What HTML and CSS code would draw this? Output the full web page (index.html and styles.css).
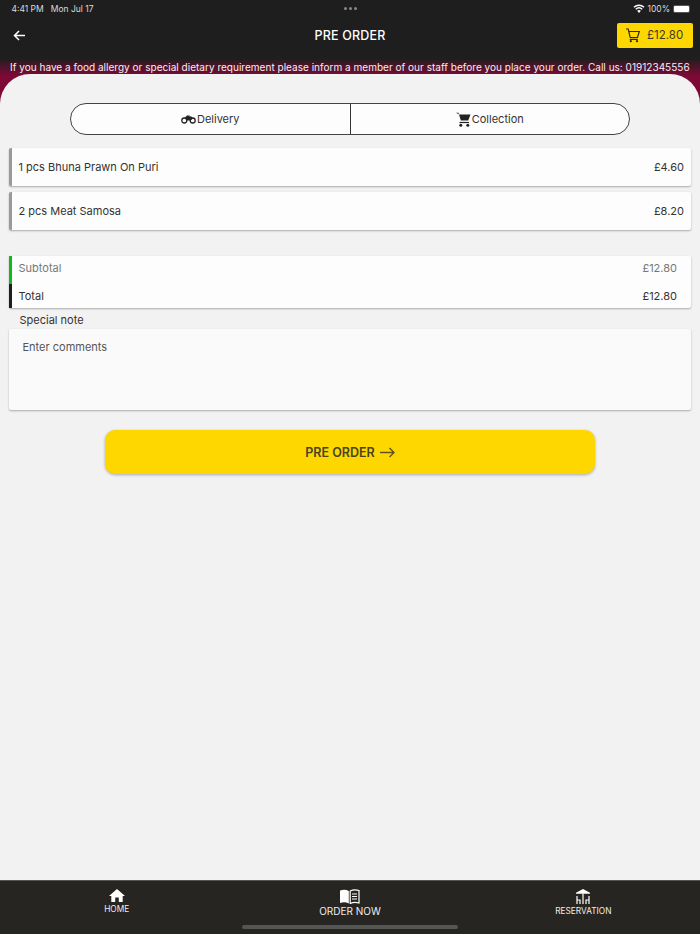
FILE: index.html
```html
<!DOCTYPE html>
<html lang="en">
<head>
    <meta charset="UTF-8">
    <meta name="viewport" content="width=device-width, initial-scale=1.0">
    <title>Pre Order</title>
    <link rel="stylesheet" href="styles.css">
</head>
<body>
    <div class="app">
        <header class="top">
            <div class="status-bar">
                <span class="status-time">4:41 PM<span class="status-date">Mon Jul 17</span></span>
                <span class="status-dots"><i></i><i></i><i></i></span>
                <span class="status-right">
                    <svg class="wifi" width="12" height="9" viewBox="0 0 24 18"><path d="M12 18l-3.600-4.400a5.600 5.600 0 0 1 7.200 0z" fill="#fff"/><path d="M2 6.500a15 15 0 0 1 20 0M5.600 10.500a9.600 9.600 0 0 1 12.800 0" fill="none" stroke="#fff" stroke-width="3"/></svg>
                    100%
                    <span class="battery"><span class="battery-fill"></span></span>
                </span>
            </div>
            <div class="nav-bar">
                <svg class="back" width="13" height="11" viewBox="0 0 14 12"><path d="M13 6H1.500M6.500 1L1.500 6l5 5" fill="none" stroke="#fff" stroke-width="1.600"/></svg>
                <h1 class="nav-title">PRE ORDER</h1>
                <button class="cart-btn">
                    <svg width="16" height="16" viewBox="0 0 16 16"><path d="M1 2h2.200l2 8.500h7.300L14.300 4.500H3.800M4.800 12.300h8" fill="none" stroke="#2a2a20" stroke-width="1.200"/><circle cx="5.800" cy="14.200" r="1.100" fill="#2a2a20"/><circle cx="12" cy="14.200" r="1.100" fill="#2a2a20"/></svg>
                    <span>£12.80</span>
                </button>
            </div>
        </header>

        <div class="sheet-wrap">
            <p class="allergy">If you have a food allergy or special dietary requirement please inform a member of our staff before you place your order. Call us: 01912345556</p>
            <main class="sheet">
                <div class="method">
                    <button class="method-btn">
                        <svg width="15" height="10" viewBox="0 0 15 10"><circle cx="3.300" cy="6.500" r="2.500" fill="none" stroke="#222" stroke-width="1.300"/><circle cx="11.700" cy="6.500" r="2.500" fill="none" stroke="#222" stroke-width="1.300"/><path d="M3.500 4L6 1.500h3l-1 .8 2.500.2 1.500 2-2.500 2h-3z" fill="#222"/></svg>
                        Delivery
                    </button>
                    <button class="method-btn">
                        <svg width="15" height="15" viewBox="0 0 15 15"><path d="M0 .8h2.500l2.300 7.600h7.400L14.500 2.500H3.200z" fill="#222"/><path d="M3.500 10.500h9.500" stroke="#222" stroke-width="1.200"/><circle cx="4.800" cy="13.200" r="1.500" fill="#222"/><circle cx="11.800" cy="13.200" r="1.500" fill="#222"/></svg>
                        Collection
                    </button>
                </div>

                <div class="item">
                    <span>1 pcs Bhuna Prawn On Puri</span>
                    <span>£4.60</span>
                </div>
                <div class="item">
                    <span>2 pcs Meat Samosa</span>
                    <span>£8.20</span>
                </div>

                <div class="totals">
                    <div class="total-row subtotal">
                        <span>Subtotal</span>
                        <span>£12.80</span>
                    </div>
                    <div class="total-row total">
                        <span>Total</span>
                        <span>£12.80</span>
                    </div>
                </div>

                <div class="note-label">Special note</div>
                <textarea class="note" placeholder="Enter comments"></textarea>

                <button class="submit">
                    PRE ORDER
                    <svg width="15" height="11" viewBox="0 0 15 11"><path d="M0 5.500h14M9.500 1L14 5.500 9.500 10" fill="none" stroke="#5e5420" stroke-width="1.400"/></svg>
                </button>
            </main>
        </div>

        <nav class="tabs">
            <div class="tab">
                <svg width="16" height="13" viewBox="0 0 16 13"><path d="M8 0L0 7h2.300v6h3.900V8.500h3.600V13h3.900V7H16z" fill="#fff"/></svg>
                <span>HOME</span>
            </div>
            <div class="tab tab-main">
                <svg width="21" height="15" viewBox="0 0 21 15"><path d="M1 1.500C4 .5 7 .5 9.800 2v12.500C7 13 4 13 1 14z" fill="#fff"/><path d="M11.200 2C14 .5 17 .5 20 1.500V14c-3-1-6-1-8.800.5z" fill="none" stroke="#fff" stroke-width="1.200"/><path d="M13 5h5M13 7.500h5M13 10h5" stroke="#fff" stroke-width="1"/></svg>
                <span>ORDER NOW</span>
            </div>
            <div class="tab">
                <svg width="16" height="15" viewBox="0 0 16 15"><path d="M8 0l7 3.800v1H1v-1z" fill="#fff"/><path d="M8 4.500V15M2 7v8M2 11h3v4M14 7v8M14 11h-3v4" fill="none" stroke="#fff" stroke-width="1.200"/></svg>
                <span>RESERVATION</span>
            </div>
            <div class="home-bar"></div>
        </nav>
    </div>
</body>
</html>
```

FILE: styles.css
```css
* {
    box-sizing: border-box;
}

body {
    margin: 0;
    font-family: Inter, "Liberation Sans", sans-serif;
    background-color: #f2f2f2;
    color: #2b2b2b;
}

button {
    font-family: inherit;
}

.app {
    width: 700px;
    height: 934px;
    display: flex;
    flex-direction: column;
    overflow: hidden;
}

.top {
    height: 56px;
    background-color: #1e1e1e;
    color: white;
}

.status-bar {
    height: 16px;
    display: flex;
    align-items: center;
    justify-content: space-between;
    padding: 1px 10px 0 11.500px;
    font-size: 8.500px;
    color: #dcdcdc;
}

.status-time {
    width: 200px;
}

.status-date {
    margin-left: 7px;
}

.status-dots {
    display: flex;
    gap: 2px;
}

.status-dots i {
    width: 3px;
    height: 3px;
    border-radius: 50%;
    background-color: #888;
}

.status-right {
    width: 200px;
    display: flex;
    align-items: center;
    justify-content: flex-end;
    gap: 2px;
}

.battery {
    width: 17px;
    height: 8px;
    margin-left: 1px;
    padding: 1px;
    border-radius: 2px;
    background-color: #555;
}

.battery-fill {
    display: block;
    height: 100%;
    border-radius: 1px;
    background-color: white;
}

.nav-bar {
    height: 38px;
    display: flex;
    align-items: center;
    justify-content: space-between;
    padding: 0 7px 0 13px;
    position: relative;
}

.nav-title {
    position: absolute;
    left: 0;
    right: 0;
    margin: 0;
    text-align: center;
    font-size: 12.500px;
    font-weight: 500;
    letter-spacing: 0.2px;
}

.cart-btn {
    width: 76px;
    height: 25px;
    display: flex;
    align-items: center;
    gap: 6px;
    padding: 0 0 0 8px;
    border: none;
    border-radius: 2px;
    background-color: #ffd700;
    color: #3a3a2a;
    font-size: 11.500px;
}

.sheet-wrap {
    flex: 1;
    display: flex;
    flex-direction: column;
    background: linear-gradient(#1e1e1e 0, #1e1e1e 2px, #7d0a36 20px, #7d0a36 40px);
}

.allergy {
    height: 18px;
    margin: 0;
    padding-left: 10px;
    font-size: 10px;
    letter-spacing: 0.02px;
    line-height: 22px;
    white-space: nowrap;
    color: #f8eef1;
}

.sheet {
    flex: 1;
    padding: 29px 9px 0;
    border-radius: 30px 30px 0 0;
    background-color: #f2f2f2;
}

.method {
    width: 560px;
    height: 32px;
    margin: 0 auto 13px;
    display: flex;
    border: 1px solid #444;
    border-radius: 16px;
    background-color: #fdfdfd;
}

.method-btn {
    flex: 1;
    display: flex;
    align-items: center;
    justify-content: center;
    gap: 1px;
    border: none;
    background: none;
    font-size: 11px;
    color: #333;
}

.method-btn + .method-btn {
    border-left: 1px solid #333;
}

.item {
    height: 38px;
    margin-bottom: 6px;
    display: flex;
    align-items: center;
    justify-content: space-between;
    padding: 0 7px 0 6.500px;
    border-left: 3.500px solid #9a9a9a;
    border-radius: 2px;
    background-color: #fdfdfd;
    box-shadow: 0 1px 2px rgba(0,0,0,0.3);
    font-size: 11px;
    color: #333;
}

.totals {
    margin-top: 26px;
    border-radius: 2px;
    background-color: #fdfdfd;
    box-shadow: 0 1px 2px rgba(0,0,0,0.3);
    font-size: 11px;
}

.total-row {
    display: flex;
    align-items: center;
    justify-content: space-between;
    padding: 0 14px 0 6.500px;
    border-left: 3.500px solid;
}

.subtotal {
    height: 28px;
    padding-bottom: 4px;
    border-left-color: #12b81c;
    color: #777;
}

.total {
    height: 24px;
    border-left-color: #1e1e1e;
    color: #333;
}

.note-label {
    height: 21px;
    padding-left: 10.500px;
    font-size: 11px;
    line-height: 25px;
    color: #333;
}

.note {
    display: block;
    width: 100%;
    height: 81px;
    padding: 11px 13.500px;
    border: none;
    border-radius: 2px;
    background-color: #fafafa;
    box-shadow: 0 1px 2px rgba(0,0,0,0.3);
    font-family: inherit;
    font-size: 11px;
    resize: none;
}

.note::placeholder {
    color: #555;
}

.submit {
    width: 490px;
    height: 44px;
    margin: 20px auto 0;
    display: flex;
    align-items: center;
    justify-content: center;
    gap: 5px;
    border: none;
    border-radius: 10px;
    background-color: #ffd700;
    box-shadow: 0 1px 3px rgba(0,0,0,0.3);
    color: #4a4420;
    font-size: 12.500px;
    font-weight: 600;
}

.tabs {
    height: 54px;
    flex-shrink: 0;
    position: relative;
    display: grid;
    grid-template-columns: repeat(3, 1fr);
    border-top: 1px solid #555;
    background-color: #262521;
    color: #eee;
}

.tab {
    display: flex;
    flex-direction: column;
    align-items: center;
    padding-top: 8px;
    font-size: 8.300px;
}

.tab span {
    margin-top: 2px;
}

.tab-main {
    font-size: 10px;
}

.tab-main span {
    margin-top: 1px;
}

.home-bar {
    position: absolute;
    left: 242px;
    bottom: 5px;
    width: 216px;
    height: 4px;
    border-radius: 2px;
    background-color: #555;
}
```
